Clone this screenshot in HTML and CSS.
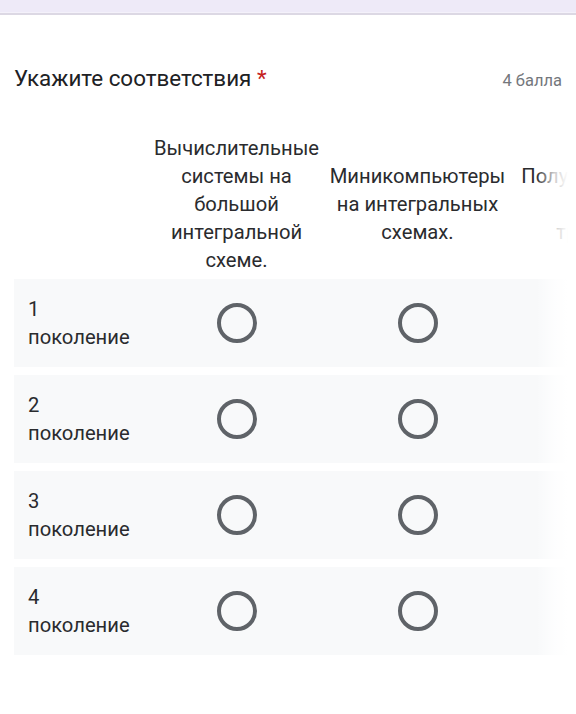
FILE: index.html
```html
<!DOCTYPE html>
<html lang="ru">
<head>
<meta charset="utf-8">
<title>Укажите соответствия</title>
<link rel="stylesheet" href="styles.css">
</head>
<body>
<div class="topbar"></div>
<main class="card">
  <div class="title-row">
    <h1 class="title">Укажите соответствия <span class="req">*</span></h1>
    <span class="points">4 балла</span>
  </div>
  <div class="grid-wrap">
    <div class="grid">
      <div class="head-row">
        <div class="head-cell"></div>
        <div class="head-cell">Вычислительные<br>системы на<br>большой<br>интегральной<br>схеме.</div>
        <div class="head-cell">Миникомпьютеры<br>на интегральных<br>схемах.</div>
        <div class="head-cell">Полупроводниковые<br>лампы и<br>транзисторы.</div>
      </div>
      <div class="row">
        <div class="label">1<br>поколение</div>
        <div class="cell"><span class="radio"></span></div>
        <div class="cell"><span class="radio"></span></div>
        <div class="cell"><span class="radio"></span></div>
      </div>
      <div class="row">
        <div class="label">2<br>поколение</div>
        <div class="cell"><span class="radio"></span></div>
        <div class="cell"><span class="radio"></span></div>
        <div class="cell"><span class="radio"></span></div>
      </div>
      <div class="row">
        <div class="label">3<br>поколение</div>
        <div class="cell"><span class="radio"></span></div>
        <div class="cell"><span class="radio"></span></div>
        <div class="cell"><span class="radio"></span></div>
      </div>
      <div class="row">
        <div class="label">4<br>поколение</div>
        <div class="cell"><span class="radio"></span></div>
        <div class="cell"><span class="radio"></span></div>
        <div class="cell"><span class="radio"></span></div>
      </div>
    </div>
    <div class="fade"></div>
  </div>
</main>
</body>
</html>
```
FILE: styles.css
```css
html, body {
  margin: 0;
  padding: 0;
  background: #ffffff;
  overflow: hidden;
}
body {
  font-family: Roboto, "Liberation Sans", sans-serif;
  color: #202124;
  width: 576px;
  height: 714px;
}
.topbar {
  height: 12px;
  background: #eeeaf8;
  border-bottom: 1px solid #f4f1fa;
  box-shadow: 0 2px 0 #dcd8e4;
}
.card {
  padding: 51px 0 0 14px;
}
.title-row {
  display: flex;
  align-items: baseline;
  justify-content: space-between;
  padding-right: 14px;
}
.title {
  margin: 0;
  font-size: 22.4px;
  font-weight: 400;
  line-height: 28px;
  color: #202124;
}
.req {
  color: #c5221f;
}
.points {
  font-size: 16.5px;
  color: #74777c;
}
.grid-wrap {
  position: relative;
  margin-top: 42px;
  width: 562px;
  overflow: hidden;
}
.grid {
  display: flex;
  flex-direction: column;
  gap: 8px;
  width: 800px;
}
.head-row,
.row {
  display: grid;
  grid-template-columns: 132px 181px 181px 226px;
  align-items: center;
}
.head-row {
  margin-bottom: -3px;
}
.head-cell {
  font-size: 20.2px;
  line-height: 28px;
  text-align: center;
  color: #2a2b2e;
  white-space: nowrap;
}
.row {
  background: #f8f9fa;
  height: 88px;
  width: 560px;
}
.label {
  font-size: 20.2px;
  line-height: 28px;
  padding-left: 14px;
  color: #2a2b2e;
}
.cell {
  display: flex;
  justify-content: center;
  align-items: center;
}
.radio {
  display: block;
  width: 32px;
  height: 32px;
  border: 4px solid #5f6368;
  border-radius: 50%;
  box-sizing: content-box;
}
.fade {
  position: absolute;
  top: 0;
  right: 0;
  width: 40px;
  height: 100%;
  background: linear-gradient(to right, rgba(255,255,255,0) 0%, rgba(255,255,255,0.75) 45%, #ffffff 80%);
}
```
